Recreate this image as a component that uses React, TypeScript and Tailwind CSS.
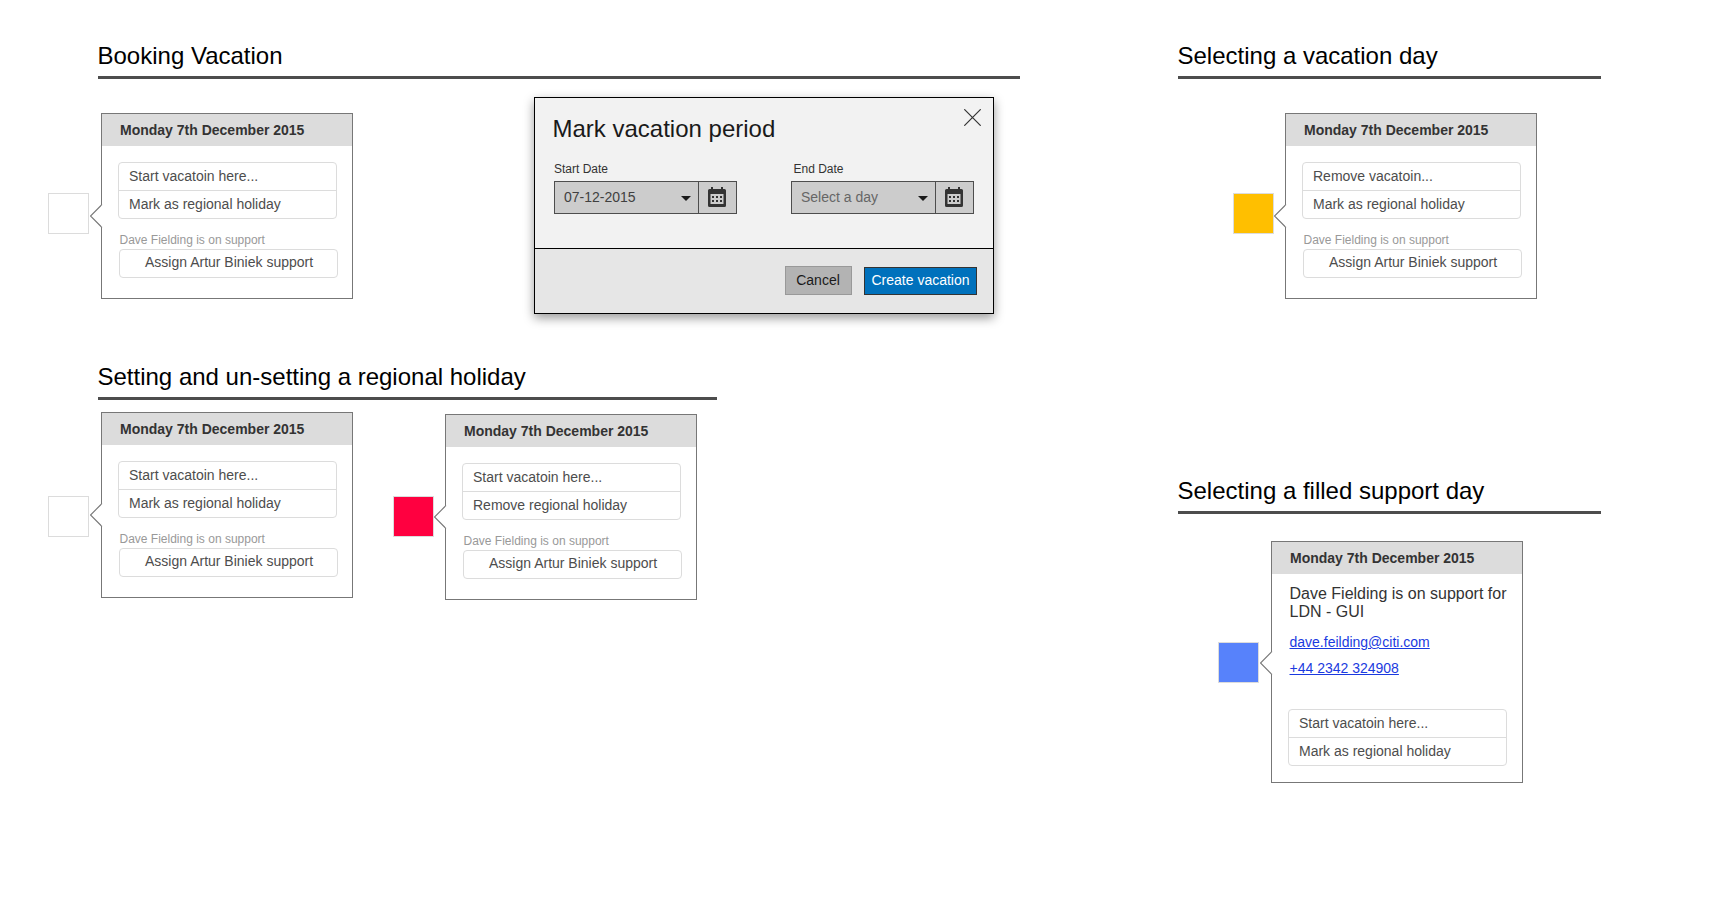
import type { ReactNode } from 'react';

function Section({ title, gap, children }: { title: string; gap: string; children: ReactNode }) {
  return (
    <section>
      <h2 className="-ml-[0.5px] h-[31px] text-[24px] leading-[22px] text-black">{title}</h2>
      <div className="h-[3px] bg-[#4d4d4d]" />
      <div className={'flex ' + gap}>{children}</div>
    </section>
  );
}

function Day({ className }: { className: string }) {
  return <div className={'size-[41px] shrink-0 border border-[#dcdcdc] ' + className} />;
}

function Actions({ items }: { items: string[] }) {
  return (
    <ul className="ml-4 h-[57px] w-[219px] divide-y divide-[#dcdcdc] rounded-[4px] border border-[#dcdcdc] text-[14px] text-[#4d4d4d]">
      {items.map((item) => (
        <li key={item} className="h-[28px] pl-[10px] leading-[26px]">{item}</li>
      ))}
    </ul>
  );
}

function Card({ className, pointer, children }: { className: string; pointer: string; children: ReactNode }) {
  return (
    <article className={'relative w-[252px] shrink-0 border border-[#777] bg-white ' + className}>
      <svg className={'absolute -left-[12px] ' + pointer} width="13" height="25" viewBox="0 0 13 25">
        <path d="M12 0.5L0.5 12L12 23.5" fill="#fff" />
        <path d="M12 0.5L0.5 12L12 23.5" fill="none" stroke="#777" strokeWidth="1.1" />
        <path d="M11.5 1.4H13V22.6H11.5Z" fill="#fff" />
      </svg>
      <h3 className="h-8 bg-[#dcdcdc] pl-[18px] text-[14px] leading-[33px] font-bold text-[#333]">Monday 7th December 2015</h3>
      {children}
    </article>
  );
}

function SupportCard({ className, items }: { className: string; items: string[] }) {
  return (
    <Card className={'h-[186px] ' + className} pointer="top-[90px]">
      <div className="mt-4">
        <Actions items={items} />
      </div>
      <p className="mt-[14px] ml-[17.5px] h-4 text-[12px] leading-[14px] text-[#999]">Dave Fielding is on support</p>
      <button className="ml-[17px] block h-[29px] w-[219px] rounded-[4px] border border-[#dcdcdc] pb-[2px] pl-[25px] text-left text-[14px] leading-[25px] text-[#4d4d4d]">
        Assign Artur Biniek support
      </button>
    </Card>
  );
}

function CalendarIcon() {
  return (
    <svg width="18" height="20" viewBox="0 0 18 20">
      <path fill="#333" fillRule="evenodd" d="M3 0h2v2h8V0h2v2h1.500A1.500 1.500 0 0 1 18 3.500V18.500A1.500 1.500 0 0 1 16.500 20H1.500A1.500 1.500 0 0 1 0 18.500V3.500A1.500 1.500 0 0 1 1.500 2H3ZM2.500 7V17H15.500V7Z" />
      <path fill="#333" d="M4 9h2v2h-2zM8 9h2v2h-2zM12 9h2v2h-2zM4 13h2v2h-2zM8 13h2v2h-2zM12 13h2v2h-2z" />
    </svg>
  );
}

function DateField({ label, value, labelClass, valueClass }: { label: string; value: string; labelClass: string; valueClass: string }) {
  return (
    <div className="w-[183px]">
      <label className={'block h-[19px] text-[12px] leading-[14px] text-[#333] ' + labelClass}>{label}</label>
      <div className="flex h-[33px] border border-[#4d4d4d] bg-[#ccc]">
        <div className={'flex flex-1 items-center justify-between pr-[7px] pl-[9px] text-[14px] leading-[31px] ' + valueClass}>
          <span className="h-[31px] leading-[30px]">{value}</span>
          <svg className="mt-px" width="10" height="5" viewBox="0 0 10 5"><path d="M0 0H10L5 5Z" fill="#1a1a1a" /></svg>
        </div>
        <div className="flex w-[38px] justify-center border-l border-[#4d4d4d] pt-[5px] pr-px">
          <CalendarIcon />
        </div>
      </div>
    </div>
  );
}

function VacationDialog() {
  return (
    <div className="mt-[18px] ml-[181px] h-[217px] w-[460px] border border-black bg-[#e6e6e6] shadow-[0_4px_10px_rgba(0,0,0,0.4)]">
      <div className="h-[151px] border-b border-black bg-[#f2f2f2]">
        <div className="flex justify-between pr-3 pl-[17.5px]">
          <h3 className="pt-[19px] text-[24px] leading-[24px] text-[#1a1a1a]">Mark vacation period</h3>
          <svg className="mt-[11px]" width="17" height="17" viewBox="0 0 17 17">
            <path d="M.3.3L16.700 16.700M16.700.3L.3 16.700" stroke="#333" strokeWidth="1.200" />
          </svg>
        </div>
        <div className="mt-[21px] flex gap-[54px] pl-[19px]">
          <DateField label="Start Date" value="07-12-2015" labelClass="" valueClass="text-[#404040]" />
          <DateField label="End Date" value="Select a day" labelClass="pl-[2.5px]" valueClass="text-[#666]" />
        </div>
      </div>
      <div className="flex justify-end gap-3 pt-[17px] pr-4 text-[14px]">
        <button className="h-[29px] w-[67px] border border-[#999] bg-[#b3b3b3] pr-px leading-[27px] text-[#1a1a1a]">Cancel</button>
        <button className="mt-px h-[28px] w-[113px] border border-[#333] bg-[#0071bc] pb-[2px] leading-[24px] text-white">Create vacation</button>
      </div>
    </div>
  );
}

export default function App() {
  return (
    <main className="flex h-[898px] w-[1727px] overflow-hidden bg-white font-['Liberation_Sans',Arial,sans-serif]">
      <div className="ml-[98px] w-[922px]">
        <div className="h-[321px] pt-[45px]">
          <Section title="Booking Vacation" gap="">
            <Day className="mt-[114px] -ml-[50px] bg-white" />
            <SupportCard className="mt-[34px] ml-3" items={['Start vacatoin here...', 'Mark as regional holiday']} />
            <VacationDialog />
          </Section>
        </div>
        <div className="w-[619px] pt-[45px]">
          <Section title="Setting and un-setting a regional holiday" gap="">
            <Day className="mt-[96px] -ml-[50px] bg-white" />
            <SupportCard className="mt-[12px] ml-3" items={['Start vacatoin here...', 'Mark as regional holiday']} />
            <Day className="mt-[96px] ml-10 bg-[#ff0040]" />
            <SupportCard className="mt-[14px] ml-[11px]" items={['Start vacatoin here...', 'Remove regional holiday']} />
          </Section>
        </div>
      </div>
      <div className="ml-[158px] w-[423px]">
        <div className="h-[435px] pt-[45px]">
          <Section title="Selecting a vacation day" gap="pl-[55px]">
            <Day className="mt-[114px] bg-[#ffbf00]" />
            <SupportCard className="mt-[34px] ml-[11px]" items={['Remove vacatoin...', 'Mark as regional holiday']} />
          </Section>
        </div>
        <div className="pt-[45px]">
          <Section title="Selecting a filled support day" gap="pl-10">
            <Day className="mt-[128px] bg-[#5782fb]" />
            <Card className="mt-[27px] ml-3 h-[242px]" pointer="top-[109px]">
              <div className="h-[135px] pt-[11px] pl-[17.5px]">
                <p className="text-[16px] leading-[18px] text-[#333]">Dave Fielding is on support for<br />LDN - GUI</p>
                <a className="mt-[13px] block text-[14px] leading-[16px] text-[#1a3ae0] underline">dave.feilding@citi.com</a>
                <a className="mt-[10px] block text-[14px] leading-[16px] text-[#1a3ae0] underline">+44 2342 324908</a>
              </div>
              <Actions items={['Start vacatoin here...', 'Mark as regional holiday']} />
            </Card>
          </Section>
        </div>
      </div>
    </main>
  );
}
